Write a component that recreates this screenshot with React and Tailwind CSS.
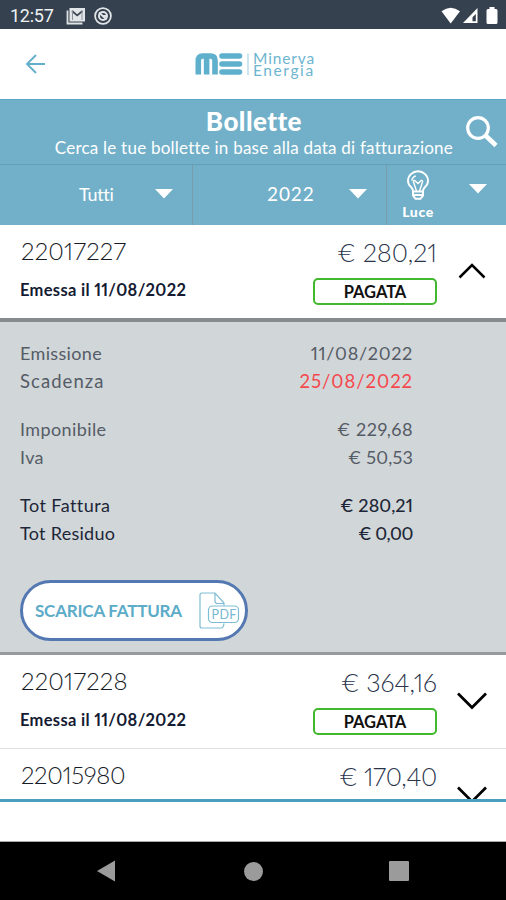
const Caret = ({ className }) => (
  <svg className={className} width="18" height="10" viewBox="0 0 18 10" fill="#fff">
    <path d="M0 0h18L9 9.5z" />
  </svg>
);

const Chevron = ({ up }) =>
  up ? (
    <svg width="28" height="16" viewBox="0 0 28 16" fill="none" stroke="#000" strokeWidth="2.5">
      <path d="M1.500 14.500 14 2l12.500 12.500" />
    </svg>
  ) : (
    <svg width="30" height="18" viewBox="0 0 30 18" fill="none" stroke="#000" strokeWidth="2.7">
      <path d="M1 1.500 15 15.500 29 1.500" />
    </svg>
  );

function StatusBar() {
  return (
    <div className="flex h-[29px] shrink-0 items-center bg-[#35414e] pl-[10px] pr-[8px] pt-[2px]">
      <span className="w-[56px] font-[Roboto] text-[18px] leading-[28px] tracking-[-0.25px] text-[#eef1f3]">12:57</span>
      <svg width="20" height="18" viewBox="0 0 20 18" fill="none">
        <path d="M1.5 3.5V16.5H16.5" stroke="#dfe3e6" strokeWidth="1.8" />
        <rect x="3.500" y="1" width="15.5" height="13.5" fill="#e2e5e8" />
        <path d="M6 4l5.200 4.500L16.500 4" stroke="#3c4753" strokeWidth="1.700" />
        <path d="M6.500 4v9M16 4v9" stroke="#8a939b" strokeWidth="1" />
      </svg>
      <svg className="ml-[8px]" width="18" height="18" viewBox="0 0 18 18" fill="none" stroke="#e2e5e8">
        <circle cx="9" cy="9" r="7.9" strokeWidth="1.8" />
        <circle cx="9" cy="9" r="4" strokeWidth="2" />
        <path d="M5 5.5 12.5 12.5M9 9h3.5" strokeWidth="1.8" />
      </svg>
      <div className="ml-auto flex items-center">
        <svg width="20" height="17" viewBox="0 0 20 17" fill="#fff">
          <path d="M.5 4.2Q9.7-2.8 19 4.2L9.7 16.5z" />
        </svg>
        <svg className="ml-px" width="17" height="17" viewBox="0 0 17 17">
          <path d="M15.500 1V16H1z" fill="#fff" />
          <path d="M13.800 7V14.300H10.500V10.300z" fill="#35414e" />
        </svg>
        <svg className="ml-[7px]" width="12" height="18" viewBox="0 0 12 18" fill="#fff">
          <path d="M3.5 0h5v2H10q1.500 0 1.500 1.500v12Q11.500 17 10 17H2Q.5 17 .5 15.500v-12Q.5 2 2 2h1.500z" />
        </svg>
      </div>
    </div>
  );
}

function Header() {
  return (
    <div className="flex h-[70px] shrink-0 items-center bg-white pl-[25px]">
      <svg width="21" height="20" viewBox="0 0 21 20" fill="none" stroke="#62aecb" strokeWidth="1.9">
        <path d="M20 10H2M11 1 2 10l9 9" />
      </svg>
      <div className="ml-[149px] flex items-center">
        <svg width="56" height="24" viewBox="0 0 56 24" fill="none" stroke="#5fb0cc">
          <path d="M3.300 22.500V8.500Q3.300 4 7.500 4H15.500Q20 4 20 8.500V22.500M11.600 4V22.500" strokeWidth="5.600" />
          <path d="M27 4H44.500M27 12H44.500M27 20H44.500" strokeWidth="5.600" strokeLinecap="round" />
          <path d="M53 1.500V23" stroke="#a9d3e2" strokeWidth="1.200" />
        </svg>
        <div className="ml-[2px] flex flex-col text-[15.500px] leading-[12px] text-[#6db5cf]">
          <span className="tracking-[0.850px]">Minerva</span>
          <span className="tracking-[1.600px]">Energia</span>
        </div>
      </div>
    </div>
  );
}

function Filters() {
  return (
    <div className="flex h-[126px] shrink-0 flex-col border-t border-[#58a7c2] bg-[#72b0c9] text-white">
      <div className="flex h-[65px] border-b border-[#649fb8]">
        <div className="flex w-[453px] flex-col items-end pt-[8px]">
          <h1 className="mr-[151px] whitespace-nowrap text-[26px] font-black leading-[27px] tracking-[0.450px]">Bollette</h1>
          <p className="mt-px whitespace-nowrap text-[17px] leading-[24px] tracking-[0.230px]">
            Cerca le tue bollette in base alla data di fatturazione
          </p>
        </div>
        <svg className="ml-[12px] mt-[15px]" width="34" height="34" viewBox="0 0 34 34" fill="none" stroke="#fff">
          <circle cx="13" cy="13" r="10.300" strokeWidth="3.200" />
          <path d="M20.500 20.500 31 30.500" strokeWidth="4.600" />
        </svg>
      </div>
      <div className="flex h-[60px]">
        <div className="flex w-[193px] items-center border-r border-[#789bad] pl-[79px] text-[18px]">
          <span className="-mt-px w-[76px] tracking-[-0.300px]">Tutti</span>
          <Caret className="-mt-[3px]" />
        </div>
        <div className="flex w-[194px] items-center border-r border-[#789bad] pl-[74px] text-[19px]">
          <span className="-mt-[2px] w-[82px] tracking-[0.900px]">2022</span>
          <Caret className="-mt-[3px]" />
        </div>
        <div className="flex flex-1 pl-[14px]">
          <div className="flex w-[34px] flex-col items-center pt-[5px]">
            <svg width="24" height="31" viewBox="0 0 24 31" fill="none" stroke="#fff" strokeWidth="1.900">
              <path d="M7 21.500Q7 19 5 17Q2 14.500 2 10.800A10 9.500 0 0 1 22 10.800Q22 14.500 19 17Q17 19 17 21.500z" />
              <path d="M7 21.500v4.200l2.500 3h5l2.500-3v-4.200M7 25h10" />
              <path d="M10.500 21 7.500 12q-.5-1.800 1.200-1.500L12 13.500l3.300-3q1.700-.3 1.200 1.500l-3 9M5.800 10.500q.5-3.500 4-4.700" strokeWidth="1.400" />
            </svg>
            <span className="mt-[2px] text-[14px] font-black leading-[17px] tracking-[0.600px]">Luce</span>
          </div>
          <Caret className="ml-[34px] mt-[19px]" />
        </div>
      </div>
    </div>
  );
}

function Bill({ number, date, amount, paid, open, numberTracking, amountTracking }) {
  return (
    <div className={`flex shrink-0 overflow-hidden bg-white pl-[21px] proportional-nums ${date ? "h-[93px]" : "h-[50px]"}`}>
      <div className="flex flex-1 flex-col pt-[11px]">
        <span className={`text-[24px] font-light leading-[30px] text-[#161b27] ${numberTracking}`}>{number}</span>
        {date && (
          <span className="mt-[12px] -ml-px whitespace-nowrap text-[16.500px] font-bold leading-[24px] tracking-[0.300px] text-[#141b32]">
            Emessa il {date}
          </span>
        )}
      </div>
      <div className="flex w-[124px] flex-col items-end pt-[12px]">
        <span className={`whitespace-nowrap text-[25px] font-light leading-[31px] text-[#29334a] ${amountTracking}`}>{amount}</span>
        {paid && (
          <span className="mt-[10px] flex h-[27px] w-[124px] items-center justify-center rounded-[5px] border-2 border-[#42b82e] pt-[2px] text-[16.500px] font-bold tracking-[-0.050px] text-[#111]">
            PAGATA
          </span>
        )}
      </div>
      <div className={`flex w-[69px] justify-center ${open ? "pt-[38px]" : "pt-[37px]"}`}>
        <Chevron up={open} />
      </div>
    </div>
  );
}

function Line({ label, value, tone, labelTone, valueTone }) {
  return (
    <div className={`flex h-[28px] items-center justify-between text-[18px] leading-[28px] proportional-nums ${tone}`}>
      <span className={labelTone}>{label}</span>
      <span className={valueTone}>{value}</span>
    </div>
  );
}

function Details() {
  return (
    <div className="flex h-[337px] shrink-0 flex-col border-b-[3px] border-t-[4px] border-b-[#969a9c] border-t-[#878b8d] bg-[#d1d6d9] pl-[20px] pt-[17px]">
      <div className="flex w-[393px] flex-col gap-[20px]">
        <div>
          <Line label="Emissione" value="11/08/2022" tone="text-[#555c66]" labelTone="tracking-[0.350px]" valueTone="tracking-[0.700px]" />
          <Line label="Scadenza" value="25/08/2022" tone="text-[#555c66]" labelTone="text-[18.500px] tracking-[1.050px]" valueTone="text-[18.500px] tracking-[0.950px] text-[#f5484c]" />
        </div>
        <div>
          <Line label="Imponibile" value="€ 229,68" tone="text-[#555c66]" labelTone="tracking-[0.400px]" valueTone="tracking-[0.500px]" />
          <Line label="Iva" value="€ 50,53" tone="text-[#555c66]" labelTone="tracking-[0.350px]" valueTone="tracking-[0.200px]" />
        </div>
        <div>
          <Line label="Tot Fattura" value="€ 280,21" tone="text-[#1d2637]" labelTone="tracking-[0.450px]" valueTone="font-medium tracking-[0.100px]" />
          <Line label="Tot Residuo" value="€ 0,00" tone="text-[#1d2637]" labelTone="tracking-[0.280px]" valueTone="font-medium tracking-[-0.400px]" />
        </div>
      </div>
      <button className="mt-[33px] flex h-[61px] w-[228px] items-center rounded-full border-[3px] border-[#5478b2] bg-white pl-[12px] text-left">
        <span className="w-[164px] whitespace-nowrap text-[17px] font-bold tracking-[-0.200px] text-[#5cabc8]">SCARICA FATTURA</span>
        <svg width="41" height="38" viewBox="0 0 41 38" fill="none" stroke="#7fbdd4" strokeWidth="1.200">
          <path d="M25 13.500V11L16 1H3Q1 1 1 3V34Q1 36 3 36H22Q24.500 36 25 31.500M16 1V9Q16 11.500 18.500 11.500H25" />
          <rect x="9.500" y="14" width="30" height="16.500" rx="4" />
          <text x="12.500" y="27" fontSize="12.500" letterSpacing="0.400" fill="#76b8d0" stroke="none" fontFamily="Lato, sans-serif">PDF</text>
        </svg>
      </button>
    </div>
  );
}

function NavBar() {
  return (
    <div className="flex h-[58px] shrink-0 items-center justify-between bg-black px-[97px]">
      <svg width="18" height="22" viewBox="0 0 18 22" fill="#9b9b9b"><path d="M18 0.500v21L0 11z" /></svg>
      <span className="ml-[2px] h-[19px] w-[19px] rounded-full bg-[#9b9b9b]" />
      <span className="h-[20px] w-[20px] rounded-[1px] bg-[#9b9b9b]" />
    </div>
  );
}

export default function App() {
  return (
    <div className="flex h-[900px] w-[506px] flex-col overflow-hidden bg-white font-[Lato,sans-serif]">
      <StatusBar />
      <Header />
      <Filters />
      <Bill number="22017227" date="11/08/2022" amount="€ 280,21" numberTracking="tracking-[0.250px]" amountTracking="tracking-[0.150px]" paid open />
      <Details />
      <Bill number="22017228" date="11/08/2022" amount="€ 364,16" numberTracking="tracking-[0.250px]" amountTracking="tracking-[0px]" paid />
      <div className="h-px shrink-0 bg-[#e2e2e2]" />
      <Bill number="22015980" amount="€ 170,40" numberTracking="tracking-[-0.300px]" amountTracking="tracking-[-0.300px]" />
      <div className="h-[3px] shrink-0 bg-[#4b9fbe]" />
      <div className="flex-1 border-b border-[#aaa] bg-white" />
      <NavBar />
    </div>
  );
}
